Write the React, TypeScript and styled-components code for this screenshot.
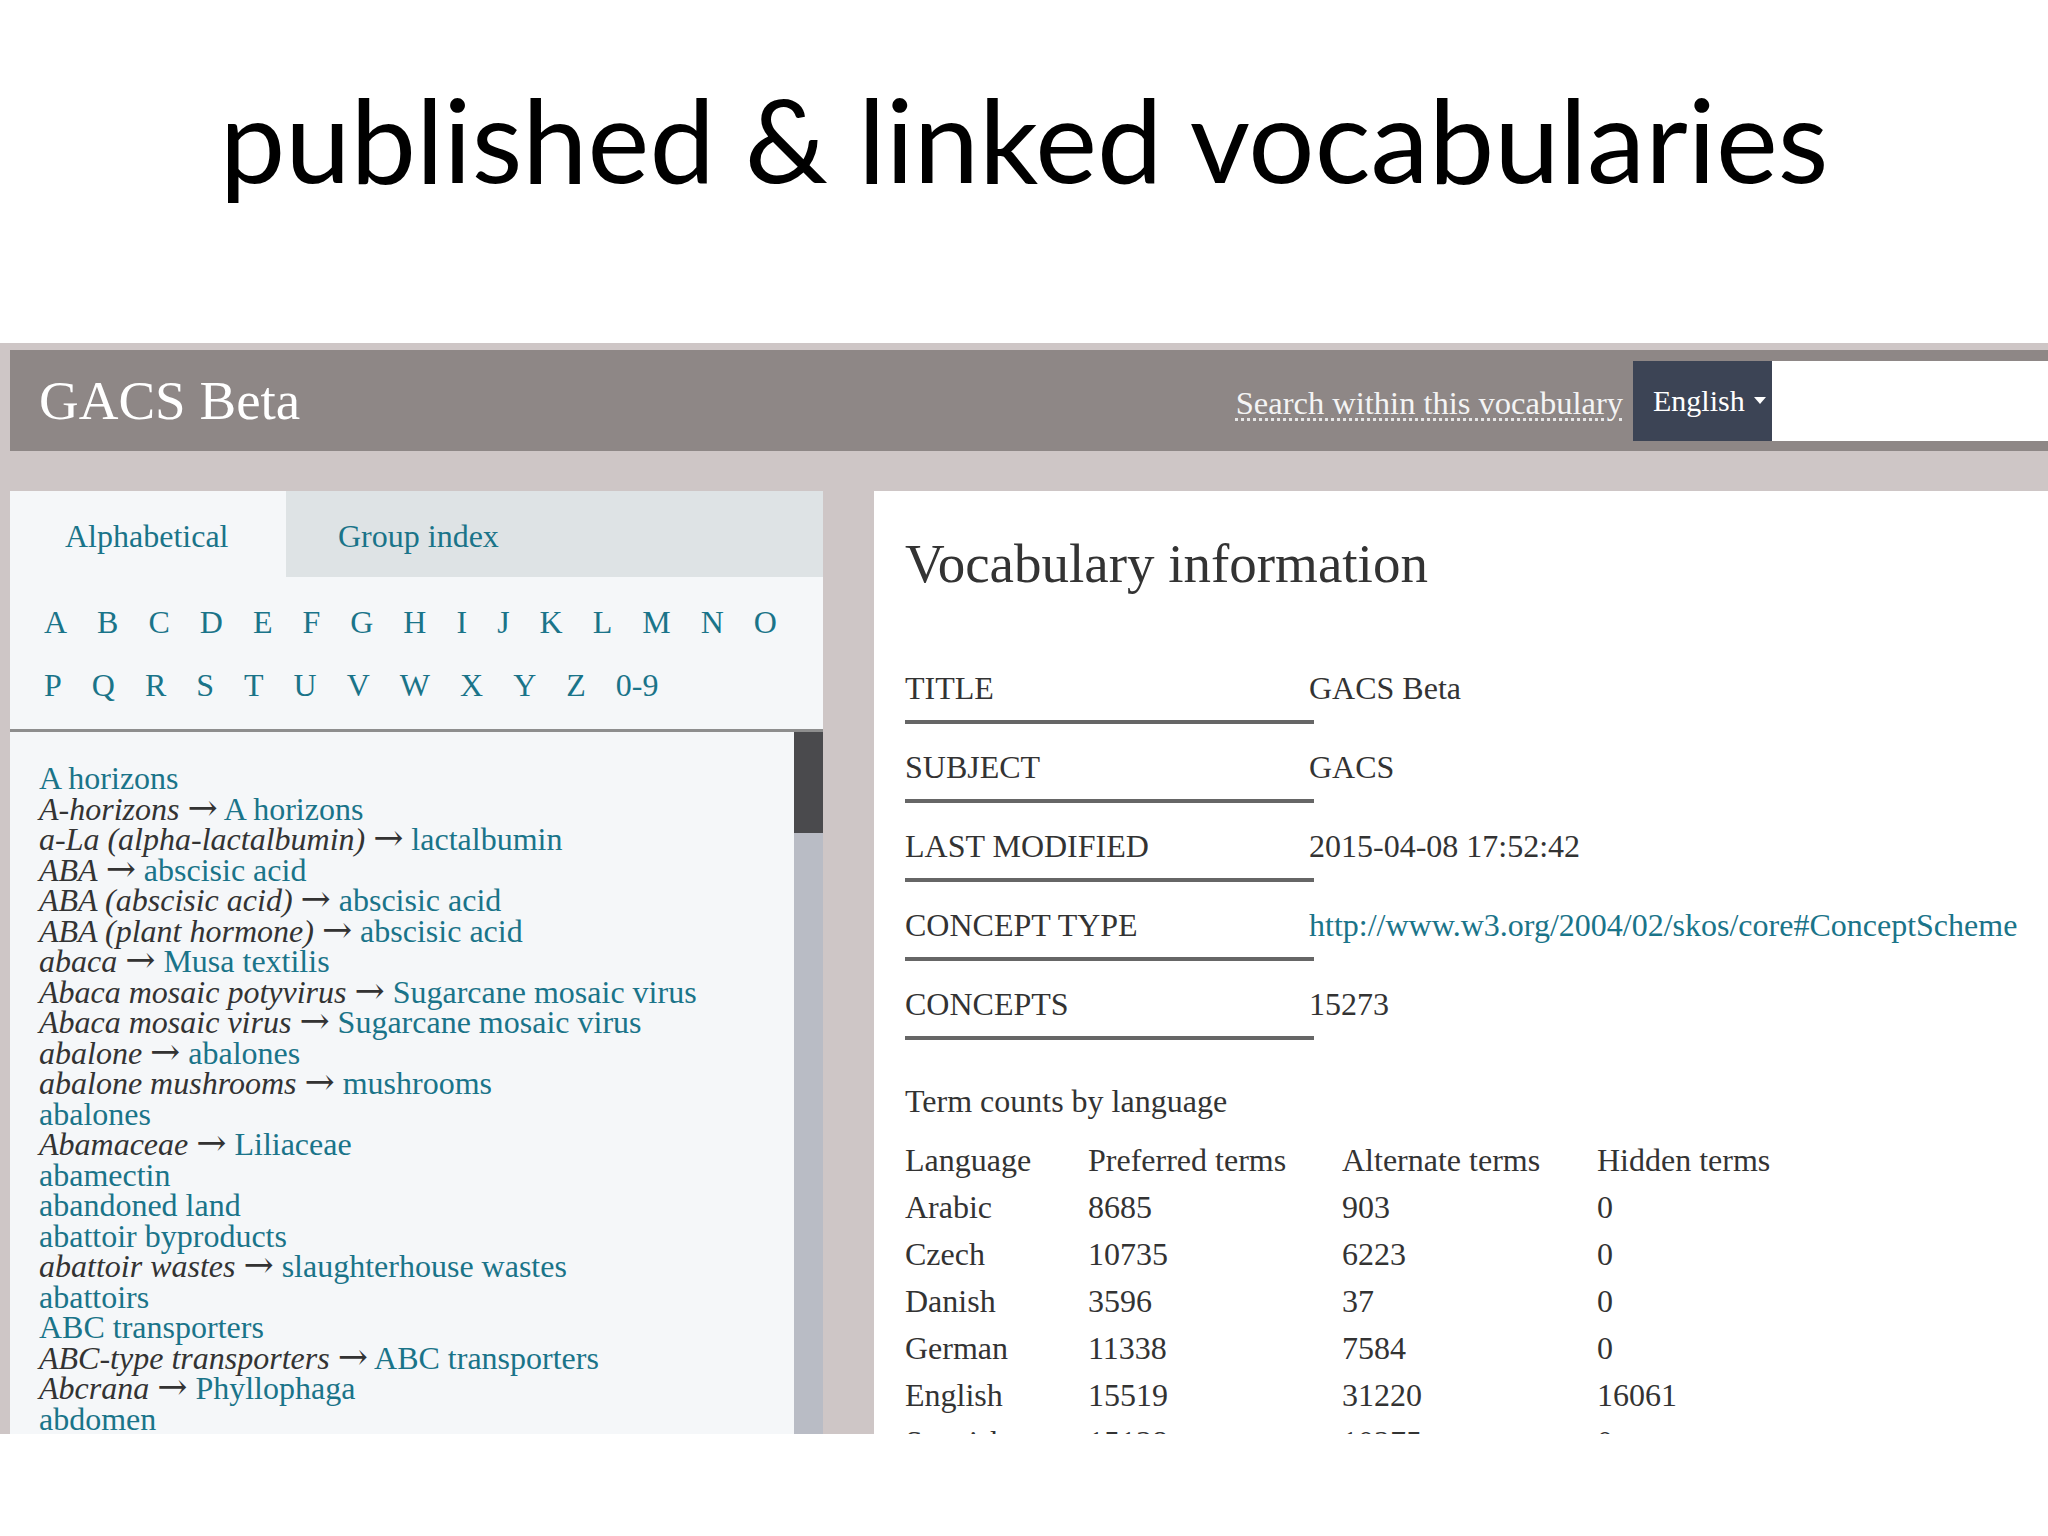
import React from "react";
import styled, { createGlobalStyle } from "styled-components";

const GlobalStyle = createGlobalStyle`
  html, body {
    margin: 0;
    padding: 0;
    background: #fff;
  }
  body {
    width: 2048px;
    height: 1536px;
    overflow: hidden;
  }
`;

const serif = `"Liberation Serif", "Times New Roman", serif`;
const teal = "#1a7489";
const ink = "#333";

const LETTERS = [..."ABCDEFGHIJKLMNOPQRSTUVWXYZ".split(""), "0-9"];

type Entry = { alt?: string; pref: string };

const ENTRIES: Entry[] = [
  { pref: "A horizons" },
  { alt: "A-horizons", pref: "A horizons" },
  { alt: "a-La (alpha-lactalbumin)", pref: "lactalbumin" },
  { alt: "ABA", pref: "abscisic acid" },
  { alt: "ABA (abscisic acid)", pref: "abscisic acid" },
  { alt: "ABA (plant hormone)", pref: "abscisic acid" },
  { alt: "abaca", pref: "Musa textilis" },
  { alt: "Abaca mosaic potyvirus", pref: "Sugarcane mosaic virus" },
  { alt: "Abaca mosaic virus", pref: "Sugarcane mosaic virus" },
  { alt: "abalone", pref: "abalones" },
  { alt: "abalone mushrooms", pref: "mushrooms" },
  { pref: "abalones" },
  { alt: "Abamaceae", pref: "Liliaceae" },
  { pref: "abamectin" },
  { pref: "abandoned land" },
  { pref: "abattoir byproducts" },
  { alt: "abattoir wastes", pref: "slaughterhouse wastes" },
  { pref: "abattoirs" },
  { pref: "ABC transporters" },
  { alt: "ABC-type transporters", pref: "ABC transporters" },
  { alt: "Abcrana", pref: "Phyllophaga" },
  { pref: "abdomen" },
];

const INFO: { label: string; value: string; link?: boolean }[] = [
  { label: "TITLE", value: "GACS Beta" },
  { label: "SUBJECT", value: "GACS" },
  { label: "LAST MODIFIED", value: "2015-04-08 17:52:42" },
  {
    label: "CONCEPT TYPE",
    value: "http://www.w3.org/2004/02/skos/core#ConceptScheme",
    link: true,
  },
  { label: "CONCEPTS", value: "15273" },
];

const COUNTS = [
  ["Language", "Preferred terms", "Alternate terms", "Hidden terms"],
  ["Arabic", "8685", "903", "0"],
  ["Czech", "10735", "6223", "0"],
  ["Danish", "3596", "37", "0"],
  ["German", "11338", "7584", "0"],
  ["English", "15519", "31220", "16061"],
  ["Spanish", "15138", "10275", "0"],
];

export default function App() {
  return (
    <>
      <GlobalStyle />
      <Slide>
        <TitleBar>published &amp; linked vocabularies</TitleBar>
        <Shot>
          <Header>
            <Brand>GACS Beta</Brand>
            <SearchLabel>Search within this vocabulary</SearchLabel>
            <LangButton>
              English
              <Caret />
            </LangButton>
            <SearchInput />
          </Header>
          <Columns>
            <LeftPanel>
              <Tabs>
                <Tab $active>Alphabetical</Tab>
                <Tab>Group index</Tab>
              </Tabs>
              <Letters>
                {LETTERS.map((l) => (
                  <Letter key={l}>{l}</Letter>
                ))}
              </Letters>
              <ListArea>
                <List>
                  {ENTRIES.map((e, i) => (
                    <Row key={i}>
                      {e.alt && (
                        <>
                          <Alt>{e.alt}</Alt> <Arrow>→</Arrow>{" "}
                        </>
                      )}
                      <Pref>{e.pref}</Pref>
                    </Row>
                  ))}
                </List>
                <Scrollbar>
                  <Thumb />
                </Scrollbar>
              </ListArea>
            </LeftPanel>
            <RightPanel>
              <Heading>Vocabulary information</Heading>
              <InfoGrid>
                {INFO.map((r) => (
                  <React.Fragment key={r.label}>
                    <InfoLabel>{r.label}</InfoLabel>
                    <InfoValue $link={r.link}>{r.value}</InfoValue>
                  </React.Fragment>
                ))}
              </InfoGrid>
              <Caption>Term counts by language</Caption>
              <CountTable>
                {COUNTS.map((row, i) =>
                  row.map((c, j) => <CountCell key={`${i}-${j}`}>{c}</CountCell>)
                )}
              </CountTable>
            </RightPanel>
          </Columns>
        </Shot>
      </Slide>
    </>
  );
}

const Slide = styled.div`
  width: 2048px;
  height: 1536px;
  display: flex;
  flex-direction: column;
  background: #fff;
`;

const TitleBar = styled.h1`
  margin: 0;
  height: 343px;
  flex-shrink: 0;
  box-sizing: border-box;
  padding-top: 68px;
  text-align: center;
  font-family: Lato, "Noto Sans", sans-serif;
  font-weight: 400;
  font-size: 117px;
  line-height: 1.2;
  color: #000;
`;

const Shot = styled.div`
  height: 1091px;
  flex-shrink: 0;
  box-sizing: border-box;
  overflow: hidden;
  background: #cec6c6;
  padding: 7px 0 0 10px;
  display: flex;
  flex-direction: column;
  font-family: ${serif};
`;

const Header = styled.div`
  height: 101px;
  flex-shrink: 0;
  background: #8e8786;
  display: flex;
  align-items: center;
`;

const Brand = styled.div`
  padding-left: 29px;
  font-size: 55px;
  color: #fff;
`;

const SearchLabel = styled.span`
  margin-left: auto;
  margin-right: 10px;
  padding-top: 6px;
  font-size: 32.5px;
  color: #f4f4f4;
  text-decoration: underline dotted #e6e6e6;
  text-decoration-thickness: 3px;
  text-underline-offset: 4px;
`;

const LangButton = styled.div`
  width: 139px;
  height: 80px;
  box-sizing: border-box;
  padding-left: 20px;
  display: flex;
  align-items: center;
  gap: 9px;
  background: #3c4455;
  color: #fff;
  font-size: 30px;
`;

const Caret = styled.span`
  width: 0;
  height: 0;
  border-left: 6px solid transparent;
  border-right: 6px solid transparent;
  border-top: 7px solid #fff;
`;

const SearchInput = styled.div`
  width: 276px;
  height: 80px;
  background: #fff;
`;

const Columns = styled.div`
  flex: 1;
  min-height: 0;
  margin-top: 40px;
  display: flex;
  gap: 51px;
`;

const LeftPanel = styled.div`
  width: 813px;
  flex-shrink: 0;
  background: #f5f7f9;
  display: flex;
  flex-direction: column;
`;

const Tabs = styled.div`
  height: 86px;
  flex-shrink: 0;
  display: flex;
  background: #dee3e5;
`;

const Tab = styled.div<{ $active?: boolean }>`
  width: ${(p) => (p.$active ? "276px" : "auto")};
  box-sizing: border-box;
  padding-left: ${(p) => (p.$active ? "55px" : "52px")};
  padding-top: 4px;
  display: flex;
  align-items: center;
  background: ${(p) => (p.$active ? "#f5f7f9" : "transparent")};
  color: ${teal};
  font-size: 32px;
`;

const Letters = styled.div`
  padding: 14px 20px 12px 34px;
  display: flex;
  flex-wrap: wrap;
  column-gap: 30px;
  border-bottom: 3px solid #8e8e8e;
`;

const Letter = styled.span`
  font-size: 32px;
  line-height: 63px;
  color: ${teal};
`;

const ListArea = styled.div`
  flex: 1;
  min-height: 0;
  display: flex;
`;

const List = styled.div`
  flex: 1;
  padding: 31px 0 0 29px;
  overflow: hidden;
`;

const Row = styled.div`
  font-size: 32px;
  line-height: 30.5px;
  white-space: nowrap;
`;

const Alt = styled.i`
  color: ${ink};
`;

const Arrow = styled.span`
  font-family: "DejaVu Serif", serif;
  font-size: 36px;
  line-height: 0;
  color: ${ink};
`;

const Pref = styled.span`
  color: ${teal};
`;

const Scrollbar = styled.div`
  width: 29px;
  background: #b9bcc5;
`;

const Thumb = styled.div`
  height: 101px;
  background: #4a4a4d;
`;

const RightPanel = styled.div`
  flex: 1;
  background: #fff;
  padding: 41px 0 0 31px;
  color: ${ink};
`;

const Heading = styled.h2`
  margin: 0;
  font-weight: 400;
  font-size: 55px;
  line-height: normal;
`;

const InfoGrid = styled.div`
  margin-top: 50px;
  display: grid;
  grid-template-columns: 409px auto;
`;

const InfoLabel = styled.div`
  padding: 28px 0 17px;
  line-height: 30px;
  font-size: 32px;
  border-bottom: 4px solid #666;
`;

const InfoValue = styled.div<{ $link?: boolean }>`
  margin-left: -5px;
  padding: 28px 0 21px;
  line-height: 30px;
  font-size: 32px;
  white-space: nowrap;
  color: ${(p) => (p.$link ? teal : ink)};
`;

const Caption = styled.div`
  margin-top: 45px;
  font-size: 32px;
  line-height: 32px;
`;

const CountTable = styled.div`
  margin-top: 20px;
  display: grid;
  grid-template-columns: 183px 254px 255px auto;
`;

const CountCell = styled.div`
  font-size: 32px;
  line-height: 47px;
  white-space: nowrap;
`;
